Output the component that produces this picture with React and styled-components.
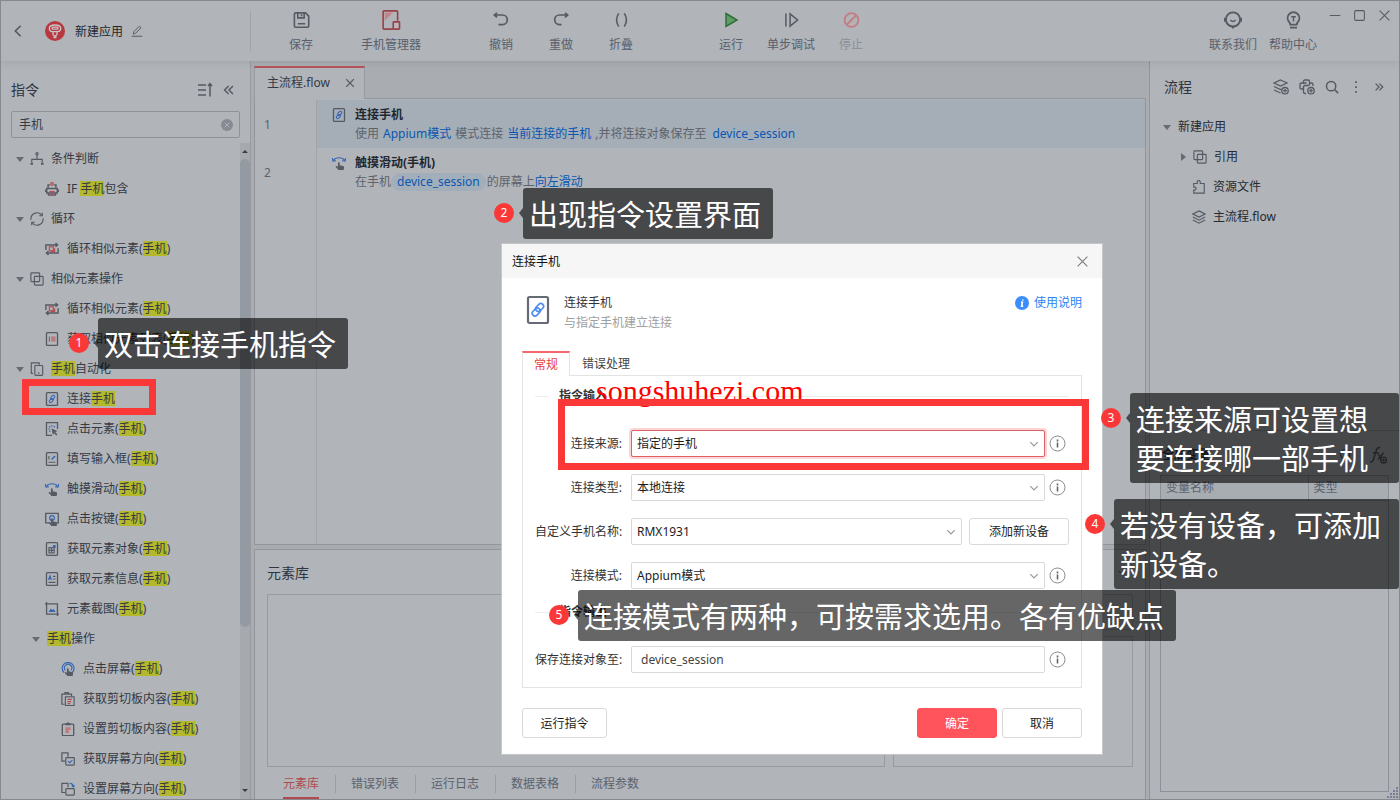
import React from 'react'
import styled, { createGlobalStyle, css } from 'styled-components'

const GlobalStyle = createGlobalStyle`
  * {
    box-sizing: border-box;
  }

  body {
    margin: 0;
    font-family: "Noto Sans", "Noto Sans CJK SC", sans-serif;
    font-size: 12px;
    line-height: 18px;
    color: #343a45;
    background: #b1b4b9;
  }

  button, input, select {
    font: inherit;
    color: inherit;
  }

  button {
    padding: 0;
    border: 0;
    background: none;
  }

  svg {
    display: block;
    flex: none;
  }
`

/* ---------- icons ---------- */

const DARK = '#555a64'
const BLUE = '#3366b4'
const RED = '#b8494f'

const Svg = ({ size = 14, w, h, box = 16, color = DARK, sw = 1.3, children }) => (
  <svg
    width={w || size}
    height={h || size}
    viewBox={`0 0 ${box} ${box}`}
    fill="none"
    stroke={color}
    strokeWidth={sw}
    aria-hidden="true"
  >
    {children}
  </svg>
)

const hand = (
  <path
    d="M6.8 8c0-1.300 2-1.300 2 0v2.600l3.800.9c.9.200 1.300.8 1.200 1.600l-.5 2.900H7.400L4.300 12.700c-.5-.9.700-1.700 1.500-1l1 .9z"
    fill={DARK}
    stroke="none"
  />
)

const frame = <rect x="1.700" y="0.8" width="12.600" height="14.400" rx="1" strokeWidth="1.500" />

const glyphs = {
  branch: (
    <>
      <circle cx="8" cy="2" r="1.300" />
      <path d="M8 3.400V8M2 12V8.500h12V12" />
      <path d="M.5 13.500h3M12.500 13.500h3" strokeWidth="2.400" />
    </>
  ),
  printer: (
    <>
      <path d="M3.500 7V3.500h2M12.500 7V3.500h-2M2 7.500h12v5H2zM4 13v2h8v-2" strokeWidth="1.600" />
      <path d="M.8 8.500v3M15.200 8.500v3" strokeWidth="1.600" />
      <circle cx="8" cy="2.200" r="1.500" stroke={RED} />
      <path d="M5 11h6M6 14h4" stroke={RED} strokeWidth="1.600" />
    </>
  ),
  cycle: (
    <>
      <path d="M1 9V8a7 7 0 0 1 12.800-4M15 7v1a7 7 0 0 1-12.800 4" />
      <path d="M14 .8V4.300h-3.500M2 15.200V11.700h3.500" />
    </>
  ),
  loopBox: (
    <>
      <path d="M1 9V3.500h13M12 1.300l2.400 2.200L12 5.500M15 7v5.500H2M4 10.300l-2.400 2.200L4 14.700" strokeWidth="1.600" />
      <rect x="5" y="5.500" width="4.500" height="4.500" stroke={RED} />
      <path d="M11 7v4H6.500" stroke={RED} />
    </>
  ),
  squares: (
    <>
      <rect x="1" y="1" width="10" height="10" rx="1" />
      <rect x="5" y="5" width="10" height="10" rx="1" />
    </>
  ),
  list: (
    <>
      {frame}
      <path d="M5 5v6" stroke={RED} strokeWidth="1.200" />
      <path d="M7 5h5v6H7z" fill="#b97a80" stroke="none" />
    </>
  ),
  phones: (
    <>
      <path d="M3.500 13H1.500V1h9v2" />
      <rect x="5.500" y="4" width="9" height="11.300" rx="1" />
      <path d="M9 12.700h2" />
    </>
  ),
  link: (
    <>
      {frame}
      <g stroke={BLUE} strokeWidth="1.200">
        <rect x="7.300" y="3.400" width="3" height="5.400" rx="1.500" transform="rotate(45 8.800 6.100)" />
        <rect x="5.700" y="7.100" width="3" height="5.400" rx="1.500" transform="rotate(45 7.200 9.800)" />
      </g>
    </>
  ),
  clickBox: (
    <>
      <path d="M8 15.200H1.700V.8h12.600V8" strokeWidth="1.500" />
      <path d="M8 3.500v2M4.700 4.700l1.300 1.400M11.300 4.700L10 6.100M3.800 8h2M4.900 11l1.200-1" stroke={BLUE} />
      <path d="M7.500 7.500l6.800 2.800-2.600 1.200 2.500 2.700-1.400 1.300-2.500-2.800-1.200 2.300z" fill={DARK} stroke="none" />
    </>
  ),
  fillBox: (
    <>
      {frame}
      <path d="M4.500 4.500v4M4 11.700h8" />
      <path d="M7.500 8.500l4-4" stroke={BLUE} strokeWidth="1.800" />
    </>
  ),
  swipe: (
    <>
      <path d="M1.500 5C4.500 1 11.500 1 14.500 5" stroke={BLUE} />
      <path d="M.4 2.300l.7 3.600 3.400-.5M15.600 2.300l-.7 3.600-3.400-.5" stroke={BLUE} />
      {hand}
    </>
  ),
  keyBox: (
    <>
      <path d="M5 12.500H.8v-11h14.400v11h-2" strokeWidth="1.500" />
      <circle cx="8" cy="6.800" r="2.700" stroke={BLUE} />
      {hand}
    </>
  ),
  objectBox: (
    <>
      {frame}
      <rect x="4.500" y="6.500" width="6" height="6" />
      <path d="M7.500 6.500v6M4.500 9.500h6" />
      <rect x="9" y="3.500" width="3.200" height="3.200" fill={BLUE} stroke="none" />
    </>
  ),
  infoBox: (
    <>
      {frame}
      <path d="M4 9l1.700-4.500L7.400 9M4.600 7.500h2.200" stroke={BLUE} />
      <path d="M9 5h3M9 8h3M4 11.800h8" />
    </>
  ),
  crop: (
    <>
      <path d="M1.800 0v13.800H16M0 2.200h14.200V16" strokeWidth="1.500" />
      <path d="M4 11.500l2.700-4 1.800 2 1.500-1.700 2 3.700z" fill={BLUE} stroke="none" />
    </>
  ),
  tap: (
    <>
      <path d="M3.300 12A6.800 6.800 0 1 1 13 12" stroke={BLUE} />
      <path d="M5 9.600a4.200 4.200 0 1 1 6.500-.2" stroke={BLUE} />
      {hand}
    </>
  ),
  paste: (
    <>
      <path d="M4 14H1V2.500h11V5M4.500 2.500V.8h4v1.700" strokeWidth="1.400" />
      <rect x="5" y="5.500" width="10" height="10" />
      <path d="M7.500 8.500h5M7.500 11h4M7.500 13.300h3" stroke={RED} />
    </>
  ),
  clipboard: (
    <>
      <rect x="1.500" y="2.500" width="13" height="13" rx="1" strokeWidth="1.500" />
      <path d="M5 2.500h6M8 .5v2" strokeWidth="2.200" />
      <path d="M5 6h6v3H9v3.500H5z" fill="#c07a80" stroke="none" />
    </>
  ),
  getTurn: (
    <>
      <path d="M5 10.500H1V1h7v4.500" strokeWidth="1.400" />
      <rect x="5.500" y="6.500" width="9.700" height="8.500" rx="1" strokeWidth="1.400" />
      <path d="M8 10.500l2 1.800 3-3" stroke={BLUE} />
    </>
  ),
  setTurn: (
    <>
      <path d="M5 12H1V1.500h7V6" strokeWidth="1.400" />
      <rect x="5.500" y="7.500" width="9.700" height="7.500" rx="1" strokeWidth="1.400" />
      <path d="M10 1.500c2.500 0 3.800 1.500 4 3.700M12.500 4l1.500 1.600L15.500 4" stroke={BLUE} />
    </>
  ),
  puzzle: <path d="M2 4h4V2.200a1.700 1.700 0 0 1 3.400 0V4H14v11H2v-3.500h1a1.700 1.700 0 0 0 0-3.400H2z" />,
  layers: <path d="M8 1l7 3.500-7 3.600-7-3.600zM1 8l7 3.600L15 8M1 11.500l7 3.600 7-3.600" />,
  layersAdd: (
    <>
      <path d="M7.500 1l6.500 3-6.500 3L1 4zM1 7.500l6.500 3 1-.5M1 11l6.500 3" />
      <circle cx="12" cy="11.700" r="3.200" fill="#b1b4b9" strokeWidth="1.300" />
      <path d="M12 9.900v3.600M10.200 11.700h3.600" />
    </>
  ),
  pythonAdd: (
    <>
      <path d="M4.500 5V2.500Q4.500 1 6 1h3q1.500 0 1.500 1.500V5q0 1.500-1.500 1.500H6Q4.500 6.500 4.500 8v2M4.500 10H2.500Q1 10 1 8.500V5.500Q1 4 2.500 4h5M10.500 4h2Q14 4 14 5.500V7M7 14.500H6Q4.500 14.500 4.500 13v-3" />
      <circle cx="12" cy="11.700" r="3.200" fill="#b1b4b9" strokeWidth="1.300" />
      <path d="M12 9.900v3.600M10.200 11.700h3.600" />
    </>
  ),
  search: (
    <>
      <circle cx="7" cy="7" r="5.300" />
      <path d="M11 11l4 4" />
    </>
  ),
  more: <path d="M8 1.500v2M8 7v2M8 12.500v2" strokeWidth="2" />,
  right: <path d="M3.500 3.500L8 8l-4.500 4.500M8.500 3.500L13 8l-4.500 4.500" />,
  left: <path d="M7.500 3.500L3 8l4.500 4.500M12.500 3.500L8 8l4.500 4.500" />,
  sort: <path d="M1 3h8M1 8h8M1 13h8M13 14.500V2M11 4l2-2.300L15 4" strokeWidth="1.500" />,
  back: <path d="M11 2L5 8l6 6" strokeWidth="1.900" />,
  pencil: <path d="M3 12l.7-3 7.500-7.500 2.200 2.200L5.900 11.200zM1 15h14" />,
  save: (
    <>
      <path d="M1.300 2.500q0-1.200 1.200-1.200h9.300l3 3v9.300q0 1.200-1.200 1.200H2.500q-1.200 0-1.200-1.200z" strokeWidth="1.500" />
      <path d="M4.500 1.500V6h6V1.500M8 2.500v2M4.500 11.500h7" strokeWidth="1.500" />
    </>
  ),
  devices: (
    <>
      <path d="M9.500 15.300H2.500q-.8 0-.8-.8V1.500q0-.8.8-.8h10q.8 0 .8.8V8.500" stroke="#974248" />
      <path d="M3 8.500V2h6.500z" fill="#c78388" stroke="none" />
      <rect x="9.800" y="9.500" width="5" height="5.800" rx=".5" stroke="#974248" fill="#bfb6bb" />
    </>
  ),
  undo: <path d="M1.500 3h8a4.800 4.800 0 0 1 0 9.600H5.500M4 .8L1.300 3 4 5.400" strokeWidth="1.700" />,
  redo: <path d="M14.500 3h-8a4.800 4.800 0 0 0 0 9.600h2M12 .8L14.700 3 12 5.400" strokeWidth="1.700" />,
  fold: <path d="M5 1Q.5 8 5 15M11 1q4.500 7 0 14" strokeWidth="1.700" />,
  play: <path d="M3 1.500L14 8 3 14.500z" fill="#609b64" stroke="#2c7039" strokeWidth="1.500" />,
  step: <path d="M2 1v14M6.500 1.500v13L14.500 8z" strokeWidth="1.600" />,
  stop: (
    <>
      <circle cx="8" cy="8" r="6.500" stroke="#c57d84" strokeWidth="1.800" />
      <path d="M3.800 12.200l8.400-8.400" stroke="#c57d84" strokeWidth="1.800" />
    </>
  ),
  contact: (
    <>
      <circle cx="8" cy="7.500" r="6.300" strokeWidth="1.700" />
      <path d="M.8 6v3.500M15.200 6v3.500" strokeWidth="1.600" />
      <path d="M5.700 8q2.300 2.600 4.600 0" />
      <path d="M6 13.500L8 16l2-2.500z" fill={DARK} stroke="none" />
    </>
  ),
  bulb: (
    <>
      <path d="M5 12.300Q5 11 3.600 9.500a5.500 5.500 0 1 1 8.800 0Q11 11 11 12.300zM4.700 15.200h6.600" strokeWidth="1.700" />
      <path d="M5.800 5h4.400M8 5v4.500" />
    </>
  ),
  close: <path d="M2 2l12 12M14 2L2 14" />,
  square: <rect x="2" y="2" width="12" height="12" rx="1.500" />,
  minus: <path d="M1 8h14" />,
  down: <path d="M2 5l6 6 6-6" />,
  formula: (
    <>
      <path d="M1 14q2 .8 3-2L6.500 4Q7.500.8 10 1.500M3.500 6h5M8 7l4 5M13 6l-5 6" />
      <circle cx="13" cy="12.500" r="2.600" fill="#b1b4b9" />
      <path d="M13 11v3M11.500 12.500h3" strokeWidth="1" />
    </>
  )
}

const Icon = ({ name, ...rest }) => <Svg {...rest}>{glyphs[name]}</Svg>

/* ---------- window frame ---------- */

const Window = styled.div`
  position: relative;
  display: flex;
  flex-direction: column;
  height: 100vh;
  min-height: 760px;
  border: 1px solid #86898e;
  background: #b1b4b9;
  overflow: hidden;
`

const Header = styled.header`
  position: relative;
  z-index: 1;
  display: flex;
  flex: none;
  height: 60px;
  background: #b1b4b9;
  box-shadow: 0 1px 8px rgba(0, 0, 0, 0.1);
`

const AppTitle = styled.div`
  display: flex;
  align-items: center;
  width: 250px;
  margin: 10px 0;
  padding-left: 10px;
  border-right: 1px solid #9fa2a7;
  color: #23272e;

  & > span {
    margin: 0 8px 0 10px;
    padding-top: 1px;
  }
`

const BackButton = styled.button`
  width: 34px;
  padding-left: 0;
`

const ToolGroups = styled.nav`
  display: flex;
  flex: 1;
  gap: 50px;
  padding-left: 20px;
`

const ToolGroup = styled.div`
  display: flex;
  gap: ${({ $gap }) => $gap || 0}px;
`

const Tool = styled.button`
  display: flex;
  flex-direction: column;
  align-items: center;
  width: 60px;
  padding-top: 9px;
  color: #57606c;
  white-space: nowrap;

  & > svg {
    height: 20px;
    margin-bottom: 6px;
  }

  &:disabled {
    color: #8b8f95;
  }
`

const WindowControls = styled.div`
  display: flex;
  align-items: flex-start;
  gap: 12px;
  padding: 8px 8px 0 6px;
`

const Body = styled.div`
  display: grid;
  grid-template-columns: 250px minmax(0, 1fr) 250px;
  flex: 1;
  min-height: 0;
`

const IconButton = styled.button`
  display: flex;
  align-items: center;
  justify-content: center;
`

/* ---------- left panel ---------- */

const Sidebar = styled.aside`
  display: flex;
  flex-direction: column;
  min-height: 0;
  border-right: 1px solid #989ba2;
`

const PanelTitle = styled.h2`
  flex: 1;
  margin: 0;
  font-size: 14px;
  font-weight: 400;
  line-height: 20px;
  color: #2f3543;
`

const SidebarHead = styled.div`
  display: flex;
  align-items: center;
  gap: 9px;
  padding: 19px 14px 11px 10px;
`

const SearchBox = styled.label`
  display: flex;
  align-items: center;
  height: 27px;
  margin: 0 10px 5px;
  padding: 0 6px 0 7px;
  border: 1px solid #8f9298;
  border-radius: 2px;

  & > input {
    flex: 1;
    min-width: 0;
    padding: 0;
    border: 0;
    outline: 0;
    background: none;
  }
`

const ClearButton = styled.button`
  width: 12px;
  height: 12px;
  border-radius: 50%;
  background: #868a92;
  color: #b1b4b9;
  display: flex;
  align-items: center;
  justify-content: center;
`

const TreeWrap = styled.div`
  display: flex;
  flex: 1;
  min-height: 0;
`

const Tree = styled.ul`
  flex: 1;
  margin: 0;
  padding: 1px 0 0;
  overflow: hidden;
  list-style: none;
`

const indents = { group: 15, item: 44, subgroup: 31, subitem: 60 }

const TreeRow = styled.li`
  display: flex;
  align-items: center;
  gap: ${({ $kind }) => ($kind === 'group' || $kind === 'subgroup' ? 6 : 8)}px;
  height: 30px;
  padding-left: ${({ $kind }) => indents[$kind]}px;
  white-space: nowrap;
`

const Caret = styled.span`
  width: 8px;
  border: 4px solid transparent;
  border-top: 5px solid #666b74;
  border-bottom: 0;

  ${({ $closed }) => $closed && css`
    width: 5px;
    border: 4px solid transparent;
    border-left: 5px solid #666b74;
    border-right: 0;
  `}
`

const TreeText = styled.span`
  margin-left: ${({ $shift }) => ($shift ? 1 : 0)}px;
`

const Mark = styled.mark`
  display: inline-block;
  line-height: 15px;
  color: inherit;
  background: #b4b92b;
`

const ScrollBar = styled.div`
  display: flex;
  flex-direction: column;
  align-items: center;
  width: 10px;
  padding: 7px 0 7px;
  background: #a6aaae;
`

const ScrollThumb = styled.div`
  width: 10px;
  height: 468px;
  margin: 6px 0 auto;
  border-radius: 5px;
  background: #949aa2;
`

const ScrollArrow = styled.span`
  border: 3px solid transparent;
  border-top-width: 0;
  border-bottom: 3px solid #3b3f45;
  transform: ${({ $down }) => ($down ? 'rotate(180deg)' : 'none')};
`

/* ---------- centre ---------- */

const Center = styled.main`
  display: flex;
  flex-direction: column;
  gap: 4px;
  min-width: 0;
  min-height: 0;
  padding: 0 3px;
  background: #a9adb1;
`

const Editor = styled.section`
  display: flex;
  flex-direction: column;
  flex: 1;
  min-height: 0;
`

const FileTabs = styled.div`
  display: flex;
  padding-top: 5px;
`

const FileTab = styled.div`
  position: relative;
  display: flex;
  align-items: center;
  gap: 15px;
  height: 33px;
  margin-bottom: -1px;
  padding: 0 9px 1px 12px;
  border: 1px solid #979ba0;
  border-top: 2px solid #b4545a;
  border-bottom: 0;
  background: #b1b4b9;
`

const Code = styled.ol`
  flex: 1;
  margin: 0;
  padding: 1px 0 0;
  border: 1px solid #92969c;
  list-style: none;
  background: linear-gradient(to right, #b1b4b9 61px, #a2a5aa 61px, #a2a5aa 62px, #b1b4b9 62px);
`

const CodeRow = styled.li`
  display: grid;
  grid-template-columns: 62px 1fr;
  height: 48px;
`

const LineNumber = styled.span`
  padding: 16px 0 0 9px;
  color: #5d646e;
`

const Statement = styled.div`
  display: grid;
  grid-template-columns: 14px 1fr;
  grid-template-rows: 18px 18px;
  column-gap: 9px;
  row-gap: 1px;
  padding: 6px 0 0 15px;
  background: ${({ $active }) => ($active ? '#a5adb6' : 'none')};

  & > strong {
    color: #22272f;
  }

  & > p {
    display: flex;
    grid-column: 2;
    gap: ${({ $gap }) => $gap}px;
    margin: 0;
    color: #5d636c;
    white-space: nowrap;
  }
`

const Param = styled.span`
  color: #0957b1;
`

const Variable = styled.span`
  margin: 0 1px 0 ${({ $pull }) => ($pull ? -4 : 0)}px;
  padding: 0 6px;
  border-radius: 9px;
  background: #a3aebb;
  color: #0957b1;
`

const Library = styled.section`
  display: flex;
  flex: none;
  flex-direction: column;
  height: 250px;
  border: 1px solid #92969c;
  border-bottom: 0;
  background: #b1b4b9;
`

const LibraryHead = styled.div`
  display: flex;
  align-items: center;
  height: 44px;
  padding: 1px 16px 0 12px;
`

const LibraryPanes = styled.div`
  display: grid;
  grid-template-columns: 1fr 240px;
  gap: 8px;
  flex: 1;
  padding: 0 12px;
`

const Pane = styled.div`
  flex: 1;
  border: 1px solid #979a9f;
`

const PaneStack = styled.div`
  display: flex;
  flex-direction: column;
  gap: 6px;
`

const SmallPane = styled.div`
  height: 36px;
  border: 1px solid #979a9f;
  border-radius: 2px;
`

const BottomTabs = styled.div`
  display: flex;
  height: 32px;
  padding: 8px 0 0 12px;
`

const BottomTab = styled.button`
  position: relative;
  height: 18px;
  padding: 0 16px;
  color: ${({ $active }) => ($active ? '#b04a50' : '#5a626e')};

  & + & {
    padding: 0 16px 0 15px;
    border-left: 1px solid #9a9da3;
  }

  ${({ $active }) => $active && css`
    &::after {
      content: "";
      position: absolute;
      left: 16px;
      right: 16px;
      bottom: -6px;
      height: 2px;
      background: #b04a50;
    }
  `}
`

/* ---------- right panel ---------- */

const FlowPanel = styled.aside`
  display: flex;
  flex-direction: column;
  min-height: 0;
  border-left: 1px solid #92969c;
`

const FlowHalf = styled.section`
  display: flex;
  flex: 1;
  flex-direction: column;
  padding-bottom: 7px;

  & + & {
    padding: 0 10px 7px;
    border-top: 1px solid #92969c;
  }
`

const FlowHead = styled.div`
  display: flex;
  align-items: center;
  gap: 10px;
  padding: 16px 14px 14px;
`

const VarHead = styled.div`
  display: flex;
  align-items: center;
  gap: 16px;
  height: 44px;
  padding: 4px 2px 0;
  font-weight: 700;

  & > span {
    flex: 1;
  }
`

const FlowRow = styled.li`
  display: flex;
  align-items: center;
  gap: 7px;
  height: 30px;
  padding-left: ${({ $level }) => [13, 31, 42][$level]}px;
  color: #262a31;
`

const VarBox = styled.div`
  flex: 1;
  border: 1px solid #8a919a;
`

const VarTable = styled.table`
  width: 100%;
  border-collapse: collapse;
  color: #5b626e;
  background: #a8adb2;

  & th {
    height: 25px;
    padding: 0 5px;
    border-bottom: 1px solid #8a919a;
    font-weight: 400;
    text-align: left;
  }

  & th + th {
    width: 80px;
    border-left: 1px solid #8a919a;
  }
`

const Grip = styled.div`
  position: absolute;
  right: 1px;
  bottom: 1px;
`

/* ---------- dialog ---------- */

const Dialog = styled.section`
  position: absolute;
  top: 243px;
  left: 501px;
  width: 600px;
  background: #fff;
  color: #333;
  box-shadow: 0 0 0 1px #c4c6c9;
`

const DialogHead = styled.header`
  display: flex;
  align-items: center;
  justify-content: space-between;
  height: 34px;
  padding: 1px 13px 0 10px;
  background: #f6f6f6;
  color: #111;
`

const DialogBody = styled.div`
  padding: 14px 20px 16px;
`

const Intro = styled.div`
  display: flex;
  align-items: flex-start;
  padding: 2px 0 0 4px;

  & > div {
    flex: 1;
    margin-left: 14px;
  }

  & p {
    margin: 0 0 2px;
  }

  & p + p {
    color: #a0a0a0;
  }
`

const HelpLink = styled.a`
  display: flex;
  align-items: center;
  gap: 5px;
  color: #2b85f5;
  text-decoration: none;
`

const DialogTabs = styled.div`
  display: flex;
  margin-top: 17px;
`

const DialogTab = styled.button`
  position: relative;
  height: 25px;
  margin-bottom: -1px;
  padding: 0 12px;
  color: #444;

  ${({ $active }) => $active && css`
    padding: 0 11px;
    border: 1px solid #e3e3e3;
    border-top: 2px solid #f5676c;
    border-bottom: 0;
    background: #fff;
    color: #e53e45;
  `}
`

const FormPanel = styled.div`
  padding: 14px 12px 14px;
  border: 1px solid #e3e3e3;
`

const Legend = styled.div`
  display: flex;
  align-items: center;
  gap: 10px;
  height: 12px;
  margin-bottom: 28px;
  font-weight: 700;
  color: #333;

  &::before,
  &::after {
    content: "";
    width: 14px;
    height: 1px;
    background: #ededed;
  }

  &::after {
    flex: 1;
  }
`

const Field = styled.div`
  display: flex;
  align-items: center;
  height: 27px;
  margin-bottom: 17px;

  &:last-child {
    margin-bottom: 0;
  }

  & > label {
    width: 87px;
    margin-right: 9px;
    text-align: right;
    white-space: nowrap;
  }
`

const SelectWrap = styled.div`
  position: relative;
  flex: 1;

  & > svg {
    position: absolute;
    top: 9px;
    right: 6px;
    pointer-events: none;
  }
`

const control = css`
  display: block;
  width: 100%;
  height: 27px;
  padding: 0 5px;
  border: 1px solid ${({ $focused }) => ($focused ? '#dd6065' : '#d9d9d9')};
  border-radius: 2px;
  outline: 0;
  background: #fff;
  box-shadow: ${({ $focused }) => ($focused ? '0 0 0 2px #fcd5d6' : 'none')};
`

const Select = styled.select`
  ${control}
  appearance: none;
  color: #1c1c1c;
`

const TextInput = styled.input`
  ${control}
  flex: 1;
  min-width: 0;
  padding: 0 9px;
  color: #444;
`

const InfoButton = styled(IconButton)`
  width: 24px;
`

const Button = styled.button`
  width: ${({ $width }) => $width}px;
  height: ${({ $height }) => $height || 30}px;
  margin-left: ${({ $gap }) => $gap || 0}px;
  padding-top: 1px;
  border: 1px solid ${({ $primary }) => ($primary ? '#ff545c' : '#d9d9d9')};
  border-radius: 3px;
  background: ${({ $primary }) => ($primary ? '#ff545c' : '#fff')};
  color: ${({ $primary }) => ($primary ? '#fff' : '#1c1c1c')};
`

const DialogFoot = styled.footer`
  display: flex;
  justify-content: space-between;
  padding-top: 20px;
`

/* ---------- guide layer ---------- */

const HighlightBox = styled.div`
  position: absolute;
  top: ${({ $y }) => $y}px;
  left: ${({ $x }) => $x}px;
  width: ${({ $w }) => $w}px;
  height: ${({ $h }) => $h}px;
  border: 7px solid #fb3838;
  pointer-events: none;
`

const Callout = styled.div`
  position: absolute;
  top: ${({ $y }) => $y}px;
  left: ${({ $x }) => $x}px;
  display: flex;
  align-items: flex-start;
`

const Badge = styled.span`
  width: 20px;
  height: 20px;
  margin: 15px 5px 0 0;
  border-radius: 50%;
  background: #fb3838;
  color: #fff;
  line-height: 20px;
  text-align: center;
`

const Pointer = styled.span`
  width: 4px;
  height: 10px;
  margin-top: 20px;
  border: 5px solid transparent;
  border-left-width: 0;
  border-right: 4px solid rgba(0, 0, 0, 0.6);
`

const Bubble = styled.div`
  width: ${({ $width }) => $width}px;
  padding: 7px 0 5px 6px;
  border-radius: 3px;
  background: rgba(0, 0, 0, 0.6);
  color: #fff;
  font-size: 29px;
  line-height: 39px;
`

const Watermark = styled.div`
  position: absolute;
  top: 373px;
  left: 595px;
  color: #f00;
  font-family: "Liberation Serif", serif;
  font-size: 30px;
  line-height: 34px;
`

/* ---------- data ---------- */

const KEYWORD = '手机'

const commands = [
  ['group', 'branch', '条件判断'],
  ['item', 'printer', 'IF 手机包含'],
  ['group', 'cycle', '循环'],
  ['item', 'loopBox', '循环相似元素(手机)'],
  ['group', 'squares', '相似元素操作'],
  ['item', 'loopBox', '循环相似元素(手机)'],
  ['item', 'list', '获取相似元素列表(手机)'],
  ['group', 'phones', '手机自动化'],
  ['item', 'link', '连接手机'],
  ['item', 'clickBox', '点击元素(手机)'],
  ['item', 'fillBox', '填写输入框(手机)'],
  ['item', 'swipe', '触摸滑动(手机)'],
  ['item', 'keyBox', '点击按键(手机)'],
  ['item', 'objectBox', '获取元素对象(手机)'],
  ['item', 'infoBox', '获取元素信息(手机)'],
  ['item', 'crop', '元素截图(手机)'],
  ['subgroup', null, '手机操作'],
  ['subitem', 'tap', '点击屏幕(手机)'],
  ['subitem', 'paste', '获取剪切板内容(手机)'],
  ['subitem', 'clipboard', '设置剪切板内容(手机)'],
  ['subitem', 'getTurn', '获取屏幕方向(手机)'],
  ['subitem', 'setTurn', '设置屏幕方向(手机)']
]

const tools = [
  { gap: 30, items: [['save', '保存', 17], ['devices', '手机管理器', 20]] },
  { items: [['undo', '撤销', 16], ['redo', '重做', 16], ['fold', '折叠', 15]] },
  { items: [['play', '运行', 16], ['step', '单步调试', 15], ['stop', '停止', 17]] }
]

const callouts = [
  { n: 1, x: 68, y: 317, width: 250, text: '双击连接手机指令' },
  { n: 2, x: 493, y: 187, width: 250, text: '出现指令设置界面' },
  { n: 3, x: 1100, y: 392, width: 269, text: <>连接来源可设置想<br />要连接哪一部手机</> },
  { n: 4, x: 1084, y: 498, width: 285, text: <>若没有设备，可添加<br />新设备。</> },
  { n: 5, x: 548, y: 589, width: 598, text: '连接模式有两种，可按需求选用。各有优缺点' }
]

/* ---------- pieces ---------- */

const Highlighted = ({ text }) => {
  const parts = text.split(KEYWORD)
  return parts.map((part, i) => (
    <React.Fragment key={i}>
      {i > 0 && <Mark>{KEYWORD}</Mark>}
      {part}
    </React.Fragment>
  ))
}

const Logo = () => (
  <svg width="20" height="20" viewBox="0 0 20 20" fill="none" stroke="#c9c4c8" strokeWidth="1.300" aria-hidden="true">
    <circle cx="10" cy="10" r="10" fill="#b73840" stroke="none" />
    <path d="M4.300 7.500q0-3.500 5.700-3.500t5.700 3.500q0 2.800-3.400 3.200h-4.600q-3.400-.4-3.400-3.200z" />
    <rect x="7" y="6.200" width="6" height="2" rx="1" />
    <path d="M8 10.700v3l1.200.8v2h1.600v-2l1.200-.8v-3" />
  </svg>
)

const InfoIcon = () => (
  <Svg size={17} box={17} color="#8a8a8a" sw={1}>
    <circle cx="8.500" cy="8.500" r="7.500" />
    <path d="M8.500 4.500v2M8.500 7.500v5" strokeWidth="1.600" stroke="#666" />
  </Svg>
)

const Info = () => (
  <InfoButton type="button" aria-label="说明"><InfoIcon /></InfoButton>
)

const SelectField = ({ id, label, value, focused, children }) => (
  <Field>
    <label htmlFor={id}>{label}</label>
    <SelectWrap>
      <Select id={id} defaultValue={value} $focused={focused}>
        <option>{value}</option>
      </Select>
      <Icon name="down" size={10} color="#999" sw={2} />
    </SelectWrap>
    {children || <Info />}
  </Field>
)

const ToolButton = ({ icon, label, size }) => (
  <Tool type="button" disabled={icon === 'stop'}>
    <Icon name={icon} w={size} h={20} />
    {label}
  </Tool>
)

const TopBar = () => (
  <Header>
    <AppTitle>
      <BackButton type="button" aria-label="返回"><Icon name="back" /></BackButton>
      <Logo />
      <span>新建应用</span>
      <Icon name="pencil" size={12} />
    </AppTitle>
    <ToolGroups>
      {tools.map((group, i) => (
        <ToolGroup key={i} $gap={group.gap}>
          {group.items.map(([icon, label, size]) => (
            <ToolButton key={icon} icon={icon} label={label} size={size} />
          ))}
        </ToolGroup>
      ))}
    </ToolGroups>
    <ToolGroup>
      <ToolButton icon="contact" label="联系我们" size={18} />
      <ToolButton icon="bulb" label="帮助中心" size={17} />
    </ToolGroup>
    <WindowControls>
      <IconButton type="button" aria-label="最小化"><Icon name="minus" w={12} h={13} sw={1.300} /></IconButton>
      <IconButton type="button" aria-label="最大化"><Icon name="square" size={13} sw={1.300} /></IconButton>
      <IconButton type="button" aria-label="关闭"><Icon name="close" size={13} sw={1.300} /></IconButton>
    </WindowControls>
  </Header>
)

const CommandPanel = () => (
  <Sidebar>
    <SidebarHead>
      <PanelTitle>指令</PanelTitle>
      <IconButton type="button" aria-label="排序"><Icon name="sort" size={16} /></IconButton>
      <IconButton type="button" aria-label="收起"><Icon name="left" sw={1.700} /></IconButton>
    </SidebarHead>
    <SearchBox>
      <input type="text" aria-label="搜索指令" defaultValue={KEYWORD} />
      <ClearButton type="button" aria-label="清除">
        <Icon name="close" size={6} color="#b1b4b9" sw={2.500} />
      </ClearButton>
    </SearchBox>
    <TreeWrap>
      <Tree>
        {commands.map(([kind, icon, text], i) => (
          <TreeRow key={i} $kind={kind}>
            {kind.endsWith('group') && <Caret />}
            {icon && <Icon name={icon} />}
            <TreeText $shift={kind.endsWith('group')}>
              <Highlighted text={text} />
            </TreeText>
          </TreeRow>
        ))}
      </Tree>
      <ScrollBar>
        <ScrollArrow />
        <ScrollThumb />
        <ScrollArrow $down />
      </ScrollBar>
    </TreeWrap>
  </Sidebar>
)

const Workspace = () => (
  <Center>
    <Editor>
      <FileTabs>
        <FileTab>
          主流程.flow
          <IconButton type="button" aria-label="关闭标签"><Icon name="close" size={10} sw={1.800} /></IconButton>
        </FileTab>
      </FileTabs>
      <Code>
        <CodeRow>
          <LineNumber>1</LineNumber>
          <Statement $active $gap={4}>
            <Icon name="link" w={14} h={18} />
            <strong>连接手机</strong>
            <p>
              <span>使用</span>
              <Param>Appium模式</Param>
              <span>模式连接</span>
              <Param>当前连接的手机</Param>
              <span>,并将连接对象保存至</span>
              <Variable $pull>device_session</Variable>
            </p>
          </Statement>
        </CodeRow>
        <CodeRow>
          <LineNumber>2</LineNumber>
          <Statement $gap={0}>
            <Icon name="swipe" w={14} h={18} />
            <strong>触摸滑动(手机)</strong>
            <p>
              <span>在手机</span>
              <Variable>device_session</Variable>
              <span>的屏幕上</span>
              <Param>向左滑动</Param>
            </p>
          </Statement>
        </CodeRow>
      </Code>
    </Editor>
    <Library>
      <LibraryHead>
        <PanelTitle>元素库</PanelTitle>
        <IconButton type="button" aria-label="折叠面板"><Icon name="down" size={12} /></IconButton>
      </LibraryHead>
      <LibraryPanes>
        <Pane />
        <PaneStack>
          <SmallPane />
          <Pane />
        </PaneStack>
      </LibraryPanes>
      <BottomTabs>
        {['元素库', '错误列表', '运行日志', '数据表格', '流程参数'].map((tab, i) => (
          <BottomTab key={tab} type="button" $active={i === 0}>{tab}</BottomTab>
        ))}
      </BottomTabs>
    </Library>
  </Center>
)

const Flows = () => (
  <FlowPanel>
    <FlowHalf>
      <FlowHead>
        <PanelTitle>流程</PanelTitle>
        <IconButton type="button" aria-label="新建流程"><Icon name="layersAdd" size={16} /></IconButton>
        <IconButton type="button" aria-label="新建脚本"><Icon name="pythonAdd" size={16} /></IconButton>
        <IconButton type="button" aria-label="搜索"><Icon name="search" sw={1.700} /></IconButton>
        <IconButton type="button" aria-label="更多"><Icon name="more" /></IconButton>
        <IconButton type="button" aria-label="收起"><Icon name="right" sw={1.700} size={12} /></IconButton>
      </FlowHead>
      <Tree>
        <FlowRow $level={0}><Caret />新建应用</FlowRow>
        <FlowRow $level={1}><Caret $closed /><Icon name="squares" />引用</FlowRow>
        <FlowRow $level={2}><Icon name="puzzle" />资源文件</FlowRow>
        <FlowRow $level={2}><Icon name="layers" />主流程.flow</FlowRow>
      </Tree>
    </FlowHalf>
    <FlowHalf>
      <VarHead>
        <span>全局变量</span>
        <IconButton type="button" aria-label="搜索变量"><Icon name="search" /></IconButton>
        <IconButton type="button" aria-label="新建变量"><Icon name="formula" size={18} /></IconButton>
      </VarHead>
      <VarBox>
        <VarTable>
          <thead>
            <tr>
              <th>变量名称</th>
              <th>类型</th>
            </tr>
          </thead>
        </VarTable>
      </VarBox>
    </FlowHalf>
  </FlowPanel>
)

const CommandDialog = () => (
  <Dialog role="dialog" aria-label="连接手机">
    <DialogHead>
      连接手机
      <IconButton type="button" aria-label="关闭"><Icon name="close" size={13} color="#777" /></IconButton>
    </DialogHead>
    <DialogBody>
      <Intro>
        <svg width="24" height="32" viewBox="0 0 24 32" fill="none" aria-hidden="true">
          <rect x="2" y="3" width="20" height="26" rx="1.500" stroke="#666a75" strokeWidth="2.200" />
          <g stroke="#4a8bf5" strokeWidth="1.600">
            <rect x="10.800" y="9" width="5.600" height="9" rx="2.800" transform="rotate(45 13.600 13.500)" />
            <rect x="7.400" y="13.500" width="5.600" height="9" rx="2.800" transform="rotate(45 10.200 18)" />
          </g>
        </svg>
        <div>
          <p>连接手机</p>
          <p>与指定手机建立连接</p>
        </div>
        <HelpLink href="#help">
          <svg width="14" height="14" viewBox="0 0 14 14" aria-hidden="true">
            <circle cx="7" cy="7" r="7" fill="#3a8dfb" />
            <path d="M8 3.500L7.700 4.600M6 6.300h1.400l-.8 4h1.600" fill="none" stroke="#fff" strokeWidth="1.600" />
          </svg>
          使用说明
        </HelpLink>
      </Intro>
      <DialogTabs>
        <DialogTab type="button" $active>常规</DialogTab>
        <DialogTab type="button">错误处理</DialogTab>
      </DialogTabs>
      <FormPanel>
        <Legend>指令输入</Legend>
        <SelectField id="source" label="连接来源:" value="指定的手机" focused />
        <SelectField id="type" label="连接类型:" value="本地连接" />
        <SelectField id="device" label="自定义手机名称:" value="RMX1931">
          <Button type="button" $width={100} $height={27} $gap={7}>添加新设备</Button>
        </SelectField>
        <SelectField id="mode" label="连接模式:" value="Appium模式" />
        <Legend>指令输出</Legend>
        <Field>
          <label htmlFor="target">保存连接对象至:</label>
          <TextInput id="target" type="text" defaultValue="device_session" />
          <Info />
        </Field>
      </FormPanel>
      <DialogFoot>
        <Button type="button" $width={85}>运行指令</Button>
        <div>
          <Button type="button" $width={80} $primary>确定</Button>
          <Button type="button" $width={80} $gap={5}>取消</Button>
        </div>
      </DialogFoot>
    </DialogBody>
  </Dialog>
)

const App = () => (
  <>
    <GlobalStyle />
    <Window>
      <TopBar />
      <Body>
        <CommandPanel />
        <Workspace />
        <Flows />
      </Body>
      <Grip>
        <svg width="11" height="11" viewBox="0 0 11 11" fill="#777e92" aria-hidden="true">
          {[[9, 0], [9, 3], [6, 3], [9, 6], [6, 6], [3, 6], [9, 9], [6, 9], [3, 9], [0, 9]].map(([x, y]) => (
            <rect key={`${x}-${y}`} x={x} y={y} width="2" height="2" />
          ))}
        </svg>
      </Grip>
      <CommandDialog />
      <Watermark>songshuhezi.com</Watermark>
      <HighlightBox $x={21} $y={378} $w={134} $h={36} />
      <HighlightBox $x={557} $y={398} $w={531} $h={71} />
      {callouts.map(({ n, x, y, width, text }) => (
        <Callout key={n} $x={x} $y={y}>
          <Badge>{n}</Badge>
          <Pointer />
          <Bubble $width={width}>{text}</Bubble>
        </Callout>
      ))}
    </Window>
  </>
)

export default App
